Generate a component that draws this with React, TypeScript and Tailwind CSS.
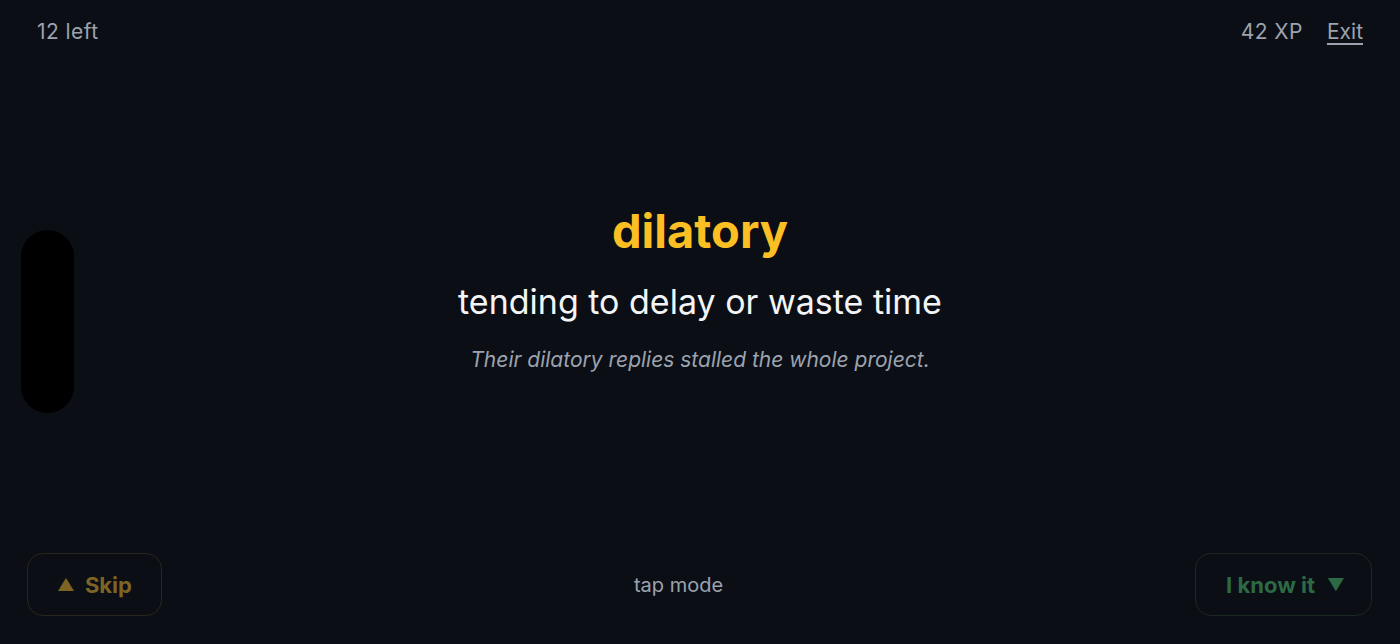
import React from "react";

export default function App() {
  return (
    <div
      className="relative flex h-[644px] w-[1400px] flex-col overflow-hidden bg-[#0b0e15] text-[#9ca3af]"
      style={{ fontFamily: "Inter, 'Noto Sans', sans-serif" }}
    >
      {/* top bar */}
      <header className="flex h-[62px] items-center justify-between pl-[37px] pr-[37px] pt-[2px] text-[21px] tracking-[0.02em]">
        <span>12 left</span>
        <div className="flex items-center gap-[24px]">
          <span>42 XP</span>
          <button className="tracking-normal underline underline-offset-[4px]">Exit</button>
        </div>
      </header>

      {/* card */}
      <main className="flex flex-1 flex-col items-center justify-center pb-[38px]">
        <h1 className="text-[47px] font-bold leading-none text-[#fbbf24]">dilatory</h1>
        <p className="mt-[31px] text-[34px] leading-none text-[#f3f4f6]">tending to delay or waste time</p>
        <p className="mt-[30px] text-[21px] italic leading-none text-[#9ca3af]">
          Their dilatory replies stalled the whole project.
        </p>
      </main>

      {/* actions */}
      <footer className="flex items-center justify-between pb-[28px] pl-[27px] pr-[28px]">
        <button className="flex h-[63px] w-[135px] items-center justify-center gap-[10px] rounded-2xl border border-[#29261b] pt-[2px] text-[22px] font-bold text-[#7c6423]">
          <span className="text-[17px]">▲</span>
          <span>Skip</span>
        </button>
        <span className="text-[20px] text-[#9ca3af]">tap mode</span>
        <button className="flex h-[63px] w-[177px] items-center justify-center gap-[12px] rounded-2xl border border-[#1c2822] pl-[4px] pt-[2px] text-[22px] font-bold text-[#2b6a45]">
          <span>I know it</span>
          <span className="text-[17px]">▼</span>
        </button>
      </footer>

      {/* camera housing */}
      <div className="absolute left-[21px] top-[230px] h-[183px] w-[53px] rounded-full bg-black" />
    </div>
  );
}
